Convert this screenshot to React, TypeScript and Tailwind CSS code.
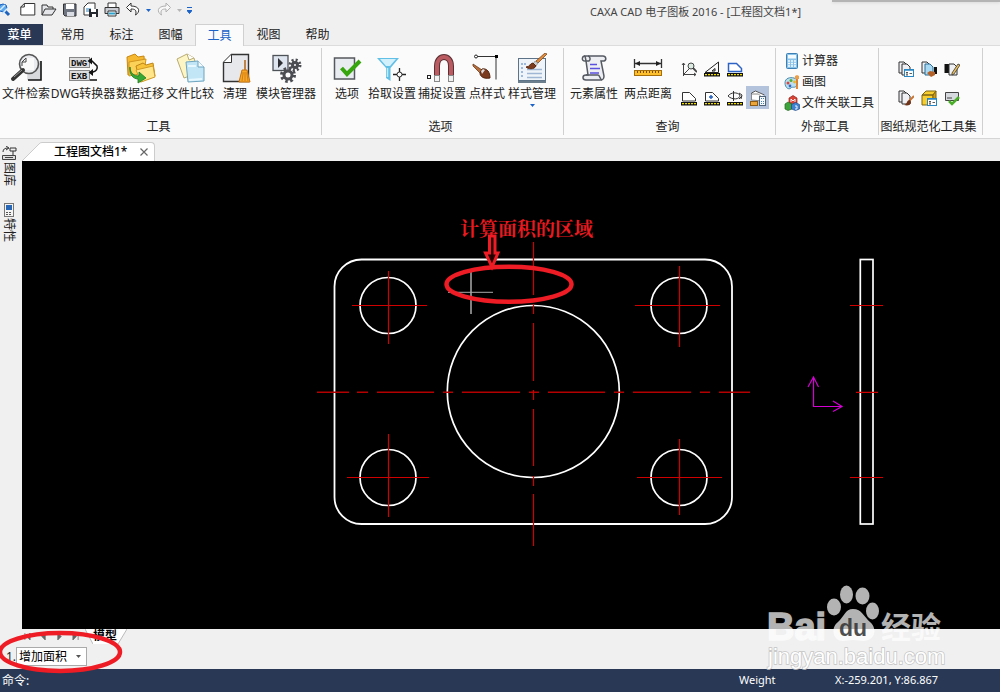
import React from "react";

type Tool = { label: string; width: string; icon: React.ReactNode; menu?: boolean };

function Icon({ size = "size-8", box = 32, children }: { size?: string; box?: number; children: React.ReactNode }) {
  return (
    <svg className={`${size} shrink-0`} viewBox={`0 0 ${box} ${box}`} fill="none" aria-hidden="true">
      {children}
    </svg>
  );
}

const page = (x: number, y: number, fill = "#eef0f4", stroke = "#333") => (
  <path d={`M${x} ${y}h5l3 3v8h-8z`} fill={fill} stroke={stroke} />
);

const gear = (cx: number, cy: number, r: number) => (
  <g>
    <circle cx={cx} cy={cy} r={r} stroke="#4b4d52" strokeWidth="4" strokeDasharray={`${(r * Math.PI) / 8} ${(r * Math.PI) / 8}`} />
    <circle cx={cx} cy={cy} r={r - 2} stroke="#4b4d52" strokeWidth="3" fill="#fbfbfb" />
  </g>
);

const brush = (
  <g>
    <path d="M31 1l-9 9-2-2 9-8z" fill="#e08a3c" stroke="#7b4a20" strokeWidth=".8" />
    <path d="M22 10l-3-2-2 3 3 2z" fill="#ccc" stroke="#777" strokeWidth=".6" />
    <path d="M20 13l-3-3c-3 0-3 4-7 4 2 2 8 3 10-1z" fill="#7a3b1e" stroke="#5c2a13" />
  </g>
);

const fileTools: Tool[] = [
  {
    label: "文件检索",
    width: "w-[50px]",
    icon: (
      <Icon>
        <path d="M18 8h13v19H17z" fill="#d7d9dd" />
        <path d="M31 8v19H18" stroke="#111" strokeWidth="1.6" />
        <circle cx="19" cy="11" r="9.5" fill="#e9ebee" stroke="#555" strokeWidth="1.6" />
        <path d="M12 15V9l4-4h8v12H13z" fill="#fafafa" />
        <path d="M12 13V9l4-4v4h-4" stroke="#444" />
        <path d="M13 17L3 26" stroke="#333" strokeWidth="4" strokeLinecap="round" />
        <path d="M12 17L4 24" stroke="#999" strokeWidth="1" />
      </Icon>
    ),
  },
  {
    label: "DWG转换器",
    width: "w-[64px]",
    icon: (
      <Icon>
        <rect x="2.500" y="4.500" width="20" height="10" fill="#ddd" stroke="#888" />
        <rect x="2.500" y="17.500" width="20" height="10" fill="#ddd" stroke="#888" />
        <text x="4" y="13" fontSize="9" fontWeight="700" fill="#111" className="font-['Liberation_Mono',monospace]">DWG</text>
        <text x="4" y="26" fontSize="9" fontWeight="700" fill="#111" className="font-['Liberation_Mono',monospace]">EXB</text>
        <path d="M22 8h3l5 5c1 3-1 5-4 6h-3M23 27h7" stroke="#111" strokeWidth="1.500" />
        <path d="M25 4.500L20.500 8l4.500 3.500zM26 16l-4.500 3.500L26 23z" fill="#111" />
      </Icon>
    ),
  },
  {
    label: "数据迁移",
    width: "w-[50px]",
    icon: (
      <Icon>
        <path d="M3 4l8-3 3 3 6-1 1 14-17 5z" fill="#f5b82e" stroke="#c98813" />
        <path d="M5 9l17-3-2 14-15 3z" fill="#fbd158" stroke="#cf9520" />
        <path d="M12 13l7-3 3 2 7-2 2 13-15 6z" fill="#f8c338" stroke="#bd8418" />
        <path d="M12 17l17-4 2 11-14 5z" fill="#ffe68c" stroke="#d39b22" />
        <path d="M6 14c0 6 4 9 9 9v-4l7 6-8 5v-4C9 26 5 21 6 14z" fill="#39a935" stroke="#1d7a20" strokeWidth=".8" />
      </Icon>
    ),
  },
  {
    label: "文件比较",
    width: "w-[50px]",
    icon: (
      <Icon>
        <path d="M3 6l10-5 7 4 4 15-14 5z" fill="#fdf6c4" stroke="#b7ab72" />
        <path d="M13 1l2 6 5-2" fill="#fff" stroke="#b7ab72" />
        <path d="M12 9l12-1 6 6v14l-16 1z" fill="#c3e6f7" stroke="#6fa5bf" />
        <path d="M24 8v6h6" fill="#f6fcff" stroke="#6fa5bf" />
        <path d="M14 13h8M15 27l13-1" stroke="#e8f8ff" strokeWidth="2" />
      </Icon>
    ),
  },
  {
    label: "清理",
    width: "w-[40px]",
    icon: (
      <Icon>
        <path d="M4.500 9.500l8-8h17v27h-25z" fill="#e7e8eb" stroke="#333" strokeWidth="1.4" />
        <path d="M12.500 1.500v8h-8" fill="#fff" stroke="#333" />
        <path d="M26 7v12" stroke="#b76b22" strokeWidth="1.6" />
        <path d="M23 17h5l3 12H20z" fill="#f7a928" stroke="#c9720d" />
        <path d="M24 21l-1 7M26 21v7M28 21l1 7M22 20h7" stroke="#c9720d" strokeWidth=".8" />
      </Icon>
    ),
  },
  {
    label: "模块管理器",
    width: "w-[62px]",
    icon: (
      <Icon>
        <rect x="3" y="2.500" width="15" height="15" fill="#dfe5ee" stroke="#4d5158" strokeWidth="1.3" />
        <path d="M8 5v10l5-5z" fill="#2c2e33" />
        {gear(25, 12, 4.5)}
        {gear(18, 22, 6)}
      </Icon>
    ),
  },
];

const optionTools: Tool[] = [
  {
    label: "选项",
    width: "w-10",
    icon: (
      <Icon>
        <rect x="3.500" y="5" width="20" height="21" fill="#e9ecf1" stroke="#55585e" strokeWidth="1.5" />
        <path d="M10.500 15l5.500 6L29 8" stroke="#37a50e" strokeWidth="4" />
      </Icon>
    ),
  },
  {
    label: "拾取设置",
    width: "w-[50px]",
    icon: (
      <Icon>
        <path d="M1 5h22l-8.500 10v13l-4.500-3V15z" fill="#62bfe6" />
        <path d="M4 6h16l-6 7h-4z" fill="#d2f0fb" />
        <path d="M11.500 15v9" stroke="#c3ecfb" strokeWidth="1.500" />
        <circle cx="23.500" cy="21.500" r="2.500" fill="#fff" stroke="#222" />
        <path d="M17 21.500h4M26 21.500h4M23.500 15v4M23.500 24v4" stroke="#222" strokeWidth="1.300" />
      </Icon>
    ),
  },
  {
    label: "捕捉设置",
    width: "w-[50px]",
    icon: (
      <Icon>
        <rect x="1.500" y="22.500" width="3" height="3" stroke="#222" />
        <path d="M11 28V13c0-12 14-12 14 0v15" stroke="#5b3034" strokeWidth="6" />
        <path d="M11 28V13c0-12 14-12 14 0v15" stroke="#b95b60" strokeWidth="4" />
        <path d="M11 22v7M25 22v7" stroke="#888" strokeWidth="6" />
        <path d="M11 23v5M25 23v5" stroke="#f1f1f1" strokeWidth="4" />
      </Icon>
    ),
  },
  {
    label: "点样式",
    width: "w-10",
    icon: (
      <Icon>
        <path d="M5 3.500h20v23" stroke="#333" />
        <circle cx="5" cy="3.500" r="1.500" fill="#fff" stroke="#222" />
        <rect x="24" y="2" width="3" height="3" fill="#000" />
        <path d="M2 11l9 6-2 3-7-7z" fill="#b86e3a" stroke="#6c3c1d" strokeWidth=".8" />
        <path d="M11 16c5-1 8 3 8 9-6 1-10-1-10-5z" fill="#7a3b1e" stroke="#54260f" />
        <path d="M10 18l2-2 2 1-3 4z" fill="#ddd" />
      </Icon>
    ),
  },
  {
    label: "样式管理",
    width: "w-[50px]",
    menu: true,
    icon: (
      <Icon>
        <rect x="2.500" y="5.500" width="27" height="22" fill="#eff4fa" stroke="#5d7387" />
        <path d="M2 29h28" stroke="#3a5468" strokeWidth="1.500" />
        <path d="M5 11h5M5 15h3M5 19h3M5 23h3" stroke="#4c7fc0" strokeDasharray="2 1" />
        <path d="M11 16.500h15M11 20.500h15M11 24.500h15" stroke="#9fb6d4" strokeWidth="1.500" />
        {brush}
      </Icon>
    ),
  },
];

const queryTools: Tool[] = [
  {
    label: "元素属性",
    width: "w-[54px]",
    icon: (
      <Icon>
        <path d="M7 3h18c3 0 4 4 1 5h-3l3 15c0 4-2 4-4 4H8c-4 0-4-5 0-5h2L8 8z" fill="#edeef2" stroke="#555a63" strokeWidth="1.500" />
        <path d="M7 3c-3 0-4 5 0 5h4c2-1 1-5-1-5M8 22h12c2 0 2 5 4 5" stroke="#555a63" strokeWidth="1.500" />
        <path d="M12 11.500h7M12 15.500h10M12 20h9" stroke="#5b4fe0" strokeWidth="1.500" />
      </Icon>
    ),
  },
  {
    label: "两点距离",
    width: "w-[54px]",
    icon: (
      <Icon>
        <path d="M2.500 6v9M29.500 6v9M3 10.500h26" stroke="#333" strokeWidth="1.300" />
        <path d="M3 10.500l5-2.500v5zM29 10.500l-5-2.500v5z" fill="#222" />
        <rect x="2.500" y="17.500" width="27" height="5" fill="#fdbf2c" stroke="#a66f0b" />
        <path d="M5.500 18v2M8.500 18v2M11.500 18v2M14.500 18v2M17.500 18v2M20.500 18v2M23.500 18v2M26.500 18v2" stroke="#7a4d00" />
      </Icon>
    ),
  },
];

const scale = (
  <g>
    <rect x="0" y="12" width="16" height="3.500" fill="#111" />
    <path d="M1 13.700h14" stroke="#f2e000" strokeWidth="1.300" strokeDasharray="2 1" />
  </g>
);

const measureIcons: { label: string; active?: boolean; art: React.ReactNode }[] = [
  {
    label: "角度",
    art: (
      <g stroke="#444">
        <path d="M2.500 15V2M1 4l1.500-2L4 4M2 13.500h13M13 12l2 1.500-2 1.500M3 13l5-5" />
        <circle cx="10" cy="5" r="3" fill="#dcebe4" />
        <path d="M12 7l4 4" strokeWidth="1.800" />
      </g>
    ),
  },
  { label: "坡度", art: <g><path d="M1 11.500L14.500 1v10.500zM8 10l3-2.500V10z" stroke="#222" />{scale}</g> },
  { label: "面积", art: <g><path d="M1.500 10.500V2.500h8l5 5v3z" fill="#fff" stroke="#2e63c6" strokeWidth="1.500" />{scale}</g> },
  { label: "周长", art: <g><path d="M1.500 11V2.500h7l6 6V11z" fill="#fff" stroke="#333" />{scale}</g> },
  { label: "重心", art: <g><path d="M1.500 11V2.500h7l6 6V11z" fill="#fff" stroke="#333" /><path d="M7 5v4M5 7h4" stroke="#205fc0" strokeWidth="1.400" />{scale}</g> },
  { label: "惯性矩", art: <g><path d="M1 6c3-4 9-4 12-1 0 5-8 5-12 1zM6.500 1v10M12 3l3 2-1 4M15 6l-3 3" stroke="#333" />{scale}</g> },
  {
    label: "重量",
    active: true,
    art: (
      <g>
        <path d="M1.500 10V3l4-2 9 4" fill="#fff" stroke="#555" />
        <path d="M1.500 10V4h7l4 4v3z" fill="#fff" stroke="#888" />
        <rect x=".5" y="11.500" width="7" height="4" fill="#eaa63a" stroke="#8d5b14" />
        <rect x="9.500" y="6.500" width="6" height="9" fill="#f6f8fa" stroke="#4e6476" />
        <path d="M11 8.500h3M11 11.500h3M11 13.500h3" stroke="#3f7fb8" strokeDasharray="1 1" />
      </g>
    ),
  },
];

const externalTools: { label: string; art: React.ReactNode }[] = [
  {
    label: "计算器",
    art: (
      <g>
        <rect x="2.500" y=".5" width="11" height="15" rx="1" fill="#8bc2e8" stroke="#3b7fb4" />
        <rect x="4" y="2" width="8" height="3.500" fill="#f4fbff" />
        <path d="M4 8h8M4 10.500h8M4 13h8" stroke="#f5fbff" strokeWidth="1.500" strokeDasharray="2 1" />
      </g>
    ),
  },
  {
    label: "画图",
    art: (
      <g>
        <path d="M1 9c0-5 5-6 9-5s4 5 3 7c-2 4-5 1-6 3-2 2-6 0-6-5z" fill="#b9dff0" stroke="#4b8bac" />
        <circle cx="4" cy="9" r="1.500" fill="#d9463e" />
        <circle cx="7" cy="6.500" r="1.500" fill="#52ad3b" />
        <circle cx="10.500" cy="8" r="1.400" fill="#f1b51f" />
        <circle cx="6" cy="12" r="1.400" fill="#3767c0" />
        <path d="M13 4v11" stroke="#e27c26" strokeWidth="1.800" />
        <path d="M11 2l2-1 2 1v3h-4z" fill="#ed9f48" />
      </g>
    ),
  },
  {
    label: "文件关联工具",
    art: (
      <g>
        <path d="M5 3l4-2.500L13 3v5L9 10 5 8z" fill="#d94336" stroke="#8c211a" strokeWidth=".7" />
        <path d="M1 9l3-2 4 2v5l-4 1.500L1 14z" fill="#3fa33b" stroke="#226920" strokeWidth=".7" />
        <path d="M7.500 9.500l4-2 4 2v4.500l-4 1.500-4-1.500z" fill="#3f82d0" stroke="#1e4e8c" strokeWidth=".7" />
        <path d="M7 7V4l2 2 2-2v3M11 11h2v3h-2" stroke="#fff" strokeWidth=".9" />
      </g>
    ),
  },
];

const dialogBadge = (
  <g>
    <rect x="6.500" y="8.500" width="9" height="7" fill="#fff" stroke="#2a86c2" />
    <path d="M6 9h10" stroke="#2a86c2" strokeWidth="1.500" />
    <path d="M8 11.500h2M9 11.500v2.500M8 14h2M11.500 12.500h2.500" stroke="#333" strokeWidth=".8" />
  </g>
);

const standardIcons: { label: string; art: React.ReactNode }[] = [
  { label: "批量改名", art: <g>{page(1, 1)}{page(4, 3)}{dialogBadge}</g> },
  { label: "批量替换", art: <g>{page(1, 1)}{page(4, 3, "#a8d9f4", "#2b6d94")}<path d="M13 6h3v7h-3z" fill="#111" /><path d="M6 12l3-2 5 1v3l-4 2z" fill="#b5612a" /></g> },
  { label: "批量编辑", art: <g><path d="M.5 3H5v9H.5z" fill="#111" />{page(5, 3)}<path d="M8 12l6-9 2 1-6 9-2 1z" fill="#f0c35a" stroke="#333" strokeWidth=".8" /></g> },
  { label: "批量样式", art: <g>{page(1, 1)}{page(4, 3)}<path d="M16 6l-5 5" stroke="#c97634" strokeWidth="2" /><path d="M12 10c-4 0-2 4-6 5 4 1 7 0 7-3z" fill="#6f3317" /></g> },
  { label: "图纸打包", art: <g><path d="M1 5l4-4h10l-3 4zM1 5h11v10H1z" fill="#f8ce2e" stroke="#7d6412" /><path d="M12 5l3-4v9l-3 4z" fill="#d29c12" stroke="#7d6412" />{dialogBadge}</g> },
  { label: "图纸检查", art: <g><path d="M1.500 2.500h13v8h-13z" fill="#d6d9de" stroke="#444" /><path d="M3 8h5" stroke="#444" /><path d="M5 11l3 3 7-7" stroke="#4bae28" strokeWidth="2.500" /></g> },
];

function RibbonButton({ tool }: { tool: Tool }) {
  return (
    <button className={`${tool.width} flex shrink-0 flex-col items-center whitespace-nowrap pt-[5px]`}>
      {tool.icon}
      <span className="mt-px leading-4">{tool.label}</span>
      {tool.menu && (
        <svg className="mt-0.5 h-[3px] w-[5px]" viewBox="0 0 5 3" aria-hidden="true"><path d="M0 0h5L2.500 3z" fill="#1b63c9" /></svg>
      )}
    </button>
  );
}

function Group({ title, width, inset, children }: { title: string; width: string; inset: string; children: React.ReactNode }) {
  return (
    <section className={`flex shrink-0 flex-col border-r border-[#d0d0d0] ${width}`}>
      <div className={`flex h-[71px] items-start ${inset}`}>{children}</div>
      <h2 className="whitespace-nowrap pr-1 text-center leading-4">{title}</h2>
    </section>
  );
}

const quickIcons: { label: string; width: string; art: React.ReactNode }[] = [
  { label: "应用", width: "w-5", art: <g transform="translate(-3)"><path d="M2 3l10 10" stroke="#1d62bd" strokeWidth="3" /><circle cx="6" cy="6" r="4" fill="#5da8ed" stroke="#1d62bd" /><path d="M5 12l6-6M3 8l5-5" stroke="#d6edff" strokeWidth="1.500" /></g> },
  { label: "新建", width: "w-[21px]", art: <path d="M.8 5l3.500-3.500h10.500v11.500h-14zM4.300 1.500V5H.8" fill="#fff" stroke="#333" /> },
  { label: "打开", width: "w-[21px]", art: <path d="M1 13V3h5l1 2h5v2M1 13l3-6h11l-4 6z" fill="#e4e6ea" stroke="#333" /> },
  { label: "保存", width: "w-[21px]", art: <g><path d="M1.500 2h12.500v12H3l-1.500-1.500z" fill="#6e7480" stroke="#333" /><path d="M4 2h8v5H4z" fill="#fff" /><path d="M5 10h7v4H5z" fill="#d9dde3" /></g> },
  { label: "另存为", width: "w-[21px]", art: <g><path d="M1 5l4-4h7v12H1z" fill="#fff" stroke="#333" /><path d="M3 7h5M3 9h3" stroke="#2b80bd" /><path d="M6 7h9v8H6z" fill="#26292f" /><path d="M8 7h5v3H8zM9 12h4v3H9z" fill="#fff" /></g> },
  { label: "打印", width: "w-[21px]", art: <g><path d="M4 5V1h8v4" fill="#fff" stroke="#333" /><path d="M1 5.500h14v6H1z" fill="#c9ccd2" stroke="#333" /><path d="M4 9h8v5H4z" fill="#fff" stroke="#333" /><path d="M5 11.500h6" stroke="#29a3cf" strokeWidth="2" /></g> },
  { label: "撤销", width: "w-[21px]", art: <path d="M6 1L1.500 5.500 6 10V7c4 0 6 1 4.500 6C15.500 10 15 4 6 4z" fill="#fff" stroke="#333" /> },
];

function QuickAccess() {
  return (
    <div className="flex w-[200px] items-center pb-1">
      {quickIcons.map((q) => (
        <button key={q.label} aria-label={q.label} className={`${q.width} shrink-0`}>
          <Icon size="size-4" box={16}>{q.art}</Icon>
        </button>
      ))}
      <button aria-label="撤销列表" className="w-2.5"><svg className="h-[3px] w-[5px]" viewBox="0 0 5 3"><path d="M0 0h5L2.500 3z" fill="#1b63c9" /></svg></button>
      <button aria-label="重做" className="w-[21px]">
        <Icon size="size-4" box={16}><path d="M10 1l4.500 4.500L10 10V7c-4 0-6 1-4.500 6C.5 10 1 4 10 4z" fill="#f8f8f8" stroke="#b0b0b0" /></Icon>
      </button>
      <button aria-label="重做列表" className="w-2.5"><svg className="h-[3px] w-[5px]" viewBox="0 0 5 3"><path d="M0 0h5L2.500 3z" fill="#b5b5b5" /></svg></button>
      <button aria-label="自定义快速访问"><svg className="h-[7px] w-[5px]" viewBox="0 0 5 7"><path d="M0 .5h5M0 3.500h5L2.500 6.500z" stroke="#1b63c9" fill="#1b63c9" /></svg></button>
    </div>
  );
}

const menuTabs = ["常用", "标注", "图幅", "工具", "视图", "帮助"];

function Cross({ x, y, x1, x2, y1, y2 }: { x: number; y: number; x1: number; x2: number; y1: number; y2: number }) {
  return (
    <g>
      <circle cx={x} cy={y} r="28" stroke="#fff" strokeWidth="1.700" />
      <path d={`M${x1} ${y}H${x2}M${x + 0.5} ${y1}V${y2}`} stroke="#d00000" strokeWidth="1.200" />
    </g>
  );
}

function Drawing() {
  return (
    <svg className="h-full w-full" viewBox="22 161 978 468" fill="none" role="img" aria-label="工程图">
      <rect x="334.500" y="259.500" width="397.500" height="264.500" rx="27" stroke="#fff" strokeWidth="1.800" />
      <circle cx="533.300" cy="391.500" r="86" stroke="#fff" strokeWidth="1.700" />
      <Cross x={388} y={305.5} x1={352} x2={427} y1={271} y2={344} />
      <Cross x={679} y={305.5} x1={635} x2={720} y1={266} y2={347} />
      <Cross x={388} y={477.5} x1={347} x2={429} y1={434} y2={517} />
      <Cross x={679} y={477.5} x1={637} x2={722} y1={439} y2={515} />
      <path d="M317 392.300H349M357 392.300h11M377 392.300h57M443 392.300h10M462 392.300h58M529 392.300h10M548 392.300h57M614 392.300h10M633 392.300h58M700 392.300h10M719 392.300h31" stroke="#b40000" strokeWidth="1.400" />
      <path d="M533.500 242v53M533.500 304v10M533.500 323v58M533.500 390v10M533.500 409v57M533.500 476v10M533.500 494v52" stroke="#d00000" strokeWidth="1.200" />
      <rect x="860.300" y="259.500" width="12.700" height="264.500" stroke="#fff" strokeWidth="1.700" />
      <path d="M850 305.500h33M856 392.300h22M850 477.500h33" stroke="#d00000" strokeWidth="1.200" />
      <path d="M813.500 407V378M808 387l5.500-10 5 10M813 406.500h29M833 401l9 5.500-9 5" stroke="#d400d4" strokeWidth="1.200" />
      <path d="M471 272v42" stroke="#808080" strokeWidth="2" />
      <path d="M448 292.300h45" stroke="#a8a8a8" />
      <text x="460" y="236" fontSize="19" fontWeight="700" fill="#e8191f" className="font-['Noto_Serif_CJK_SC','Noto_Sans_CJK_SC',serif]">计算面积的区域</text>
      <path d="M489.500 236v17h-4l6.500 14 6-14h-3v-17z" stroke="#ee1c24" strokeWidth="3" fill="#250000" />
      <ellipse cx="509" cy="284.200" rx="62.500" ry="17.500" stroke="#ee1c24" strokeWidth="4.500" />
    </svg>
  );
}

function Watermark() {
  return (
    <svg className="pointer-events-none absolute bottom-5 right-12 h-[90px] w-[190px]" viewBox="762 582 190 90" aria-hidden="true">
      <g fill="#fff" opacity=".7">
        <text x="767" y="640" fontSize="38" fontWeight="700" strokeWidth="1.500" stroke="#fff" className="font-['Liberation_Sans',sans-serif]">Bai</text>
        <ellipse cx="834" cy="607" rx="7" ry="8.500" />
        <ellipse cx="846.500" cy="594.500" rx="6.500" ry="9" />
        <ellipse cx="862.500" cy="596" rx="7" ry="8.500" />
        <ellipse cx="872.500" cy="611" rx="6.500" ry="8.500" />
        <path d="M853 609c-8 0-9 8-15 13-8 6-5 19 5 19 4 0 6-1 10-1s6 1 10 1c12 0 15-12 7-19-6-5-8-13-17-13z" />
        <text x="881" y="638" fontSize="30" fontWeight="700" className="font-['Noto_Sans_CJK_SC',sans-serif]">经验</text>
      </g>
      <text x="839" y="636" fontSize="23" fontWeight="700" fill="#303030" fillOpacity=".85" className="font-['Liberation_Sans',sans-serif]">du</text>
      <text x="768" y="664" fontSize="22" fill="#fff" stroke="#c4c4c4" strokeWidth="1.500" paintOrder="stroke" className="font-['Liberation_Sans',sans-serif]">jingyan.baidu.com</text>
    </svg>
  );
}

export default function App() {
  return (
    <div className="relative flex min-h-screen flex-col overflow-hidden bg-[#f0f0f0] font-['Noto_Sans','Noto_Sans_CJK_SC',sans-serif] text-[12px] text-[#222]">
      <header className="flex h-6 items-center">
        <QuickAccess />
        <h1 className="flex-1 whitespace-nowrap pl-[390px] text-[11px] leading-5 text-[#444]">CAXA CAD 电子图板 2016 - [工程图文档1*]</h1>
      </header>
      <div className="absolute right-0 top-0 h-0.5 w-[168px] bg-[#b4b4b4] shadow-sm" />

      <nav className="flex h-[22px] border-b border-[#dcdcdc]">
        <button className="mr-[5px] w-[43px] bg-[#293955] pr-1 font-medium text-white">菜单</button>
        {menuTabs.map((tab) => (
          <button
            key={tab}
            className={
              tab === "工具"
                ? "-mb-px w-[49px] border border-b-0 border-[#d0d0d0] bg-[#fbfbfb] text-[#1b63c9]"
                : "w-[49px] shrink-0"
            }
          >
            {tab}
          </button>
        ))}
      </nav>

      <div className="flex border-b border-[#d5d5d5] bg-[#fbfbfb] pb-[3px] pt-0.5">
        <Group title="工具" width="w-[322px]" inset="pl-px">
          {fileTools.map((t) => <RibbonButton key={t.label} tool={t} />)}
        </Group>
        <Group title="选项" width="w-[242px]" inset="pl-[5px]">
          {optionTools.map((t) => <RibbonButton key={t.label} tool={t} />)}
        </Group>
        <Group title="查询" width="w-[212px]" inset="pl-[3px]">
          {queryTools.map((t) => <RibbonButton key={t.label} tool={t} />)}
          <div className="grid grid-cols-4 gap-y-1.5 pl-0.5 pt-[9px]">
            {measureIcons.map((m, i) => (
              <button
                key={m.label}
                aria-label={m.label}
                className={`flex size-[23px] items-center justify-center ${i === 3 ? "col-start-1" : ""} ${m.active ? "bg-[#b4c3dc]" : ""}`}
              >
                <Icon size="size-4" box={16}>{m.art}</Icon>
              </button>
            ))}
          </div>
        </Group>
        <Group title="外部工具" width="w-[103px]" inset="pl-2">
          <div className="flex flex-col pt-0.5">
            {externalTools.map((t) => (
              <button key={t.label} className="flex h-[21px] items-center gap-0.5 whitespace-nowrap">
                <Icon size="size-4" box={16}>{t.art}</Icon>
                {t.label}
              </button>
            ))}
          </div>
        </Group>
        <Group title="图纸规范化工具集" width="w-[104px]" inset="pl-[15px]">
          <div className="grid grid-cols-3 gap-y-1.5 pt-[9px]">
            {standardIcons.map((s) => (
              <button key={s.label} aria-label={s.label} className="flex size-[23px] items-center justify-center">
                <Icon size="size-4" box={16}>{s.art}</Icon>
              </button>
            ))}
          </div>
        </Group>
      </div>

      <main className="flex flex-1">
        <aside className="flex w-[22px] shrink-0 flex-col items-center gap-4 pr-1 pt-[7px]">
          <button className="flex flex-col items-center">
            <Icon size="size-4" box={16}>
              <path d="M2 6c0-3 2-4 5-4M5 0l3 2-3 2M9 2h6v3H9zM12 5v4" stroke="#333" />
              <path d="M1.500 9.500h13v4h-13zM4 11.500h8" fill="#ddd" stroke="#444" />
            </Icon>
            <span className="leading-4 [text-orientation:sideways] [writing-mode:vertical-rl]">图库</span>
          </button>
          <button className="flex flex-col items-center">
            <Icon size="size-4" box={16}>
              <rect x="3.500" y="1.500" width="9" height="13" fill="#f4f4f4" stroke="#777" />
              <path d="M5 3h6v5H5z" fill="#2767b5" />
              <path d="M5 10.500h6M5 12.500h6" stroke="#555" strokeDasharray="2 1" />
            </Icon>
            <span className="leading-4 [text-orientation:sideways] [writing-mode:vertical-rl]">特性</span>
          </button>
        </aside>
        <div className="flex min-w-0 flex-1 flex-col">
          <div className="flex h-[22px] items-end">
            <svg className="h-[19px] w-5" viewBox="0 0 20 19" aria-hidden="true">
              <path d="M0 19L17 2q1-1.500 3-1.500V19z" fill="#fff" />
              <path d="M0 19L17 2q1-1.500 3-1.500" fill="none" stroke="#ccc" />
            </svg>
            <div className="flex h-[19px] w-[113px] items-center justify-between rounded-tr border-r border-t border-[#ccc] bg-white pl-3 pr-1.5">
              <button className="whitespace-nowrap font-medium text-black">工程图文档1*</button>
              <button aria-label="关闭">
                <svg className="size-2" viewBox="0 0 8 8" aria-hidden="true"><path d="M.5.5l7 7M7.500.5l-7 7" stroke="#666" strokeWidth="1.200" /></svg>
              </button>
            </div>
          </div>
          <div className="min-h-[468px] flex-1 bg-black"><Drawing /></div>
          <div className="flex h-[15px] items-start">
            <div className="flex items-center gap-[9px] pl-0.5 pt-1">
              {["M1 0v8M7 0L3 4l4 4z", "M6 0L2 4l4 4z", "M2 0l4 4-4 4z", "M1 0l4 4-4 4zM7 0v8"].map((d, i) => (
                <button key={d} aria-label={["第一页", "上一页", "下一页", "最后一页"][i]}>
                  <svg className="size-[7px]" viewBox="0 0 8 8" aria-hidden="true"><path d={d} fill="#666" stroke="#666" strokeWidth=".8" /></svg>
                </button>
              ))}
            </div>
            <button className="ml-1.5 flex h-[15px] items-center">
              <svg className="h-[15px] w-2" viewBox="0 0 8 15" aria-hidden="true"><path d="M0 0h8v15z" fill="#fff" /><path d="M0 0l8 15" stroke="#bbb" /></svg>
              <span className="h-[15px] bg-white text-center font-bold leading-[13px] text-black">模型</span>
              <svg className="h-[15px] w-2.5" viewBox="0 0 10 15" aria-hidden="true"><path d="M0 0h10L1 15H0z" fill="#fff" /><path d="M10 0L1 15" stroke="#bbb" /></svg>
            </button>
          </div>
        </div>
      </main>

      <div className="flex h-[25px] items-center pl-1.5">
        <label htmlFor="mode" className="w-2.5">1.</label>
        <div className="relative flex">
          <select id="mode" className="h-[19px] w-[71px] appearance-none border border-[#aaa] bg-white pl-0.5 leading-4 text-black">
            <option>增加面积</option>
            <option>减少面积</option>
          </select>
          <svg className="pointer-events-none absolute right-1.5 top-2 h-[3px] w-[5px]" viewBox="0 0 5 3" aria-hidden="true"><path d="M0 0h5L2.500 3z" fill="#555" /></svg>
        </div>
      </div>

      <footer className="flex h-[23px] items-center bg-[#293955] pl-0.5 text-white">
        <span className="flex-1">命令:</span>
        <span className="w-24 text-[11px]">Weight</span>
        <span className="w-[165px] whitespace-nowrap text-[11px]">X:-259.201, Y:86.867</span>
      </footer>

      <svg className="pointer-events-none absolute bottom-4 left-0 h-[46px] w-[124px]" viewBox="0 0 124 46" fill="none" aria-hidden="true">
        <ellipse cx="60" cy="22" rx="60" ry="19" stroke="#ee1c24" strokeWidth="4.500" />
      </svg>
      <Watermark />
    </div>
  );
}
